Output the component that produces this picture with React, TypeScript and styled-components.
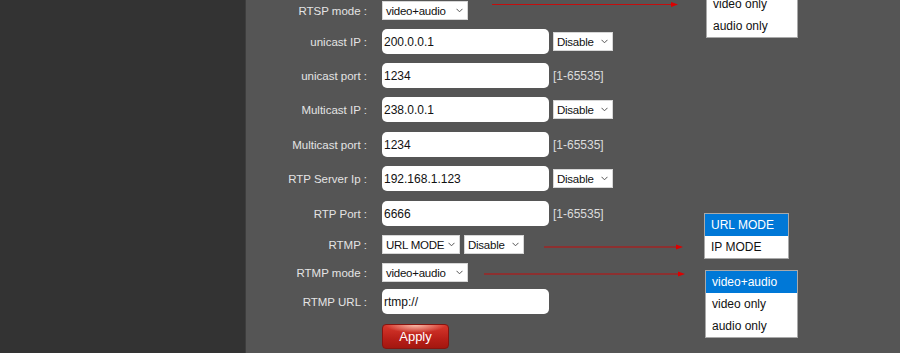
import React from "react";
import styled, { createGlobalStyle } from "styled-components";

const GlobalStyle = createGlobalStyle`
  html, body {
    margin: 0;
    padding: 0;
    background: #555555;
  }
  body {
    font-family: "Liberation Sans", Arial, sans-serif;
  }
`;

const Page = styled.div`
  display: flex;
  height: 353px;
  overflow: hidden;
  width: 900px;
`;

const Sidebar = styled.aside`
  background: #333333;
  border-right: 1px solid #3e3e3e;
  flex: 0 0 245px;
`;

const Main = styled.main`
  background: #555555;
  flex: 1;
  padding-top: 1px;
  position: relative;
`;

const Form = styled.div`
  display: flex;
  flex-direction: column;
`;

const Row = styled.div<{ $top?: number }>`
  align-items: center;
  column-gap: 15px;
  display: grid;
  grid-template-columns: 121px auto;
  margin-top: ${({ $top }) => ($top ?? 9)}px;

  &:first-child {
    margin-top: 0;
  }
`;

const Label = styled.span`
  color: #e4e4e4;
  font-size: 11.5px;
  text-align: right;
  white-space: nowrap;
`;

const Fields = styled.div`
  align-items: center;
  display: flex;
  gap: 4px;
`;

const TextBox = styled.div`
  align-items: center;
  background: #ffffff;
  border-radius: 5px;
  box-sizing: border-box;
  color: #111111;
  display: flex;
  font-size: 12px;
  height: 25px;
  padding-left: 2px;
  width: 167px;
`;

const SelectBox = styled.div<{ $w: number }>`
  align-items: center;
  background: #ffffff;
  border: 1px solid #d6d6d6;
  box-sizing: border-box;
  color: #111111;
  display: flex;
  font-size: 11.5px;
  gap: 3px;
  height: 19px;
  justify-content: space-between;
  letter-spacing: -0.25px;
  padding: 0 4px 0 3px;
  white-space: nowrap;
  width: ${({ $w }) => $w}px;
`;

const Hint = styled.span`
  color: #dcdcdc;
  font-size: 12px;
`;

const ApplyButton = styled.button`
  background:
    radial-gradient(ellipse 30px 8px at 50% 0%, rgba(255, 210, 190, 0.85), transparent),
    linear-gradient(to bottom, #d7382d, #b81f18 60%, #a3170f);
  border: 1px solid #86140f;
  border-radius: 4px;
  box-sizing: border-box;
  color: #ffffff;
  font-family: "Liberation Sans", Arial, sans-serif;
  font-size: 13px;
  height: 25px;
  padding: 0;
  width: 67px;
`;

const Popup = styled.ul<{ $left: number; $top: number; $w: number }>`
  background: #ffffff;
  border: 1px solid #a9a9a9;
  box-sizing: border-box;
  left: ${({ $left }) => $left}px;
  list-style: none;
  margin: 0;
  padding: 0;
  position: absolute;
  top: ${({ $top }) => $top}px;
  width: ${({ $w }) => $w}px;
`;

const PopupItem = styled.li<{ $active?: boolean }>`
  background: ${({ $active }) => ($active ? "#0078d7" : "transparent")};
  color: ${({ $active }) => ($active ? "#ffffff" : "#111111")};
  font-size: 12px;
  height: 22px;
  line-height: 22px;
  padding-left: 6px;
  white-space: nowrap;
`;

const Arrows = styled.svg`
  height: 100%;
  left: 0;
  pointer-events: none;
  position: absolute;
  top: 0;
  width: 100%;
`;

function Chevron() {
  return (
    <svg width="7" height="5" viewBox="0 0 7 5" style={{ flexShrink: 0 }}>
      <polyline points="0.5,0.8 3.5,3.8 6.5,0.8" fill="none" stroke="#555" strokeWidth="1" />
    </svg>
  );
}

function Select({ value, width }: { value: string; width: number }) {
  return (
    <SelectBox $w={width}>
      <span>{value}</span>
      <Chevron />
    </SelectBox>
  );
}

function Arrow({ x1, x2, y }: { x1: number; x2: number; y: number }) {
  return (
    <g>
      <line x1={x1} y1={y} x2={x2 - 6} y2={y} stroke="#c40d0d" strokeWidth="1.2" />
      <polygon points={`${x2 - 7},${y - 2.5} ${x2},${y} ${x2 - 7},${y + 2.5}`} fill="#d00" />
    </g>
  );
}

export default function App() {
  return (
    <>
      <GlobalStyle />
      <Page>
        <Sidebar />
        <Main>
          <Form>
            <Row>
              <Label>RTSP mode :</Label>
              <Fields>
                <Select value="video+audio" width={86} />
              </Fields>
            </Row>
            <Row>
              <Label>unicast IP :</Label>
              <Fields>
                <TextBox>200.0.0.1</TextBox>
                <Select value="Disable" width={60} />
              </Fields>
            </Row>
            <Row>
              <Label>unicast port :</Label>
              <Fields>
                <TextBox>1234</TextBox>
                <Hint>[1-65535]</Hint>
              </Fields>
            </Row>
            <Row>
              <Label>Multicast IP :</Label>
              <Fields>
                <TextBox>238.0.0.1</TextBox>
                <Select value="Disable" width={60} />
              </Fields>
            </Row>
            <Row $top={10}>
              <Label>Multicast port :</Label>
              <Fields>
                <TextBox>1234</TextBox>
                <Hint>[1-65535]</Hint>
              </Fields>
            </Row>
            <Row>
              <Label>RTP Server Ip :</Label>
              <Fields>
                <TextBox>192.168.1.123</TextBox>
                <Select value="Disable" width={60} />
              </Fields>
            </Row>
            <Row $top={10}>
              <Label>RTP Port :</Label>
              <Fields>
                <TextBox>6666</TextBox>
                <Hint>[1-65535]</Hint>
              </Fields>
            </Row>
            <Row>
              <Label>RTMP :</Label>
              <Fields>
                <Select value="URL MODE" width={78} />
                <Select value="Disable" width={60} />
              </Fields>
            </Row>
            <Row>
              <Label>RTMP mode :</Label>
              <Fields>
                <Select value="video+audio" width={86} />
              </Fields>
            </Row>
            <Row $top={7}>
              <Label>RTMP URL :</Label>
              <Fields>
                <TextBox>rtmp://</TextBox>
              </Fields>
            </Row>
            <Row $top={10}>
              <span />
              <Fields>
                <ApplyButton>Apply</ApplyButton>
              </Fields>
            </Row>
          </Form>

          <Arrows>
            <Arrow x1={246} x2={432} y={4.5} />
            <Arrow x1={298} x2={437} y={247} />
            <Arrow x1={238} x2={439} y={274} />
          </Arrows>

          <Popup $left={460} $top={-30} $w={92}>
            <PopupItem>video+audio</PopupItem>
            <PopupItem>video only</PopupItem>
            <PopupItem>audio only</PopupItem>
          </Popup>
          <Popup $left={458} $top={213} $w={85}>
            <PopupItem $active>URL MODE</PopupItem>
            <PopupItem>IP MODE</PopupItem>
          </Popup>
          <Popup $left={459} $top={270} $w={93}>
            <PopupItem $active>video+audio</PopupItem>
            <PopupItem>video only</PopupItem>
            <PopupItem>audio only</PopupItem>
          </Popup>
        </Main>
      </Page>
    </>
  );
}
